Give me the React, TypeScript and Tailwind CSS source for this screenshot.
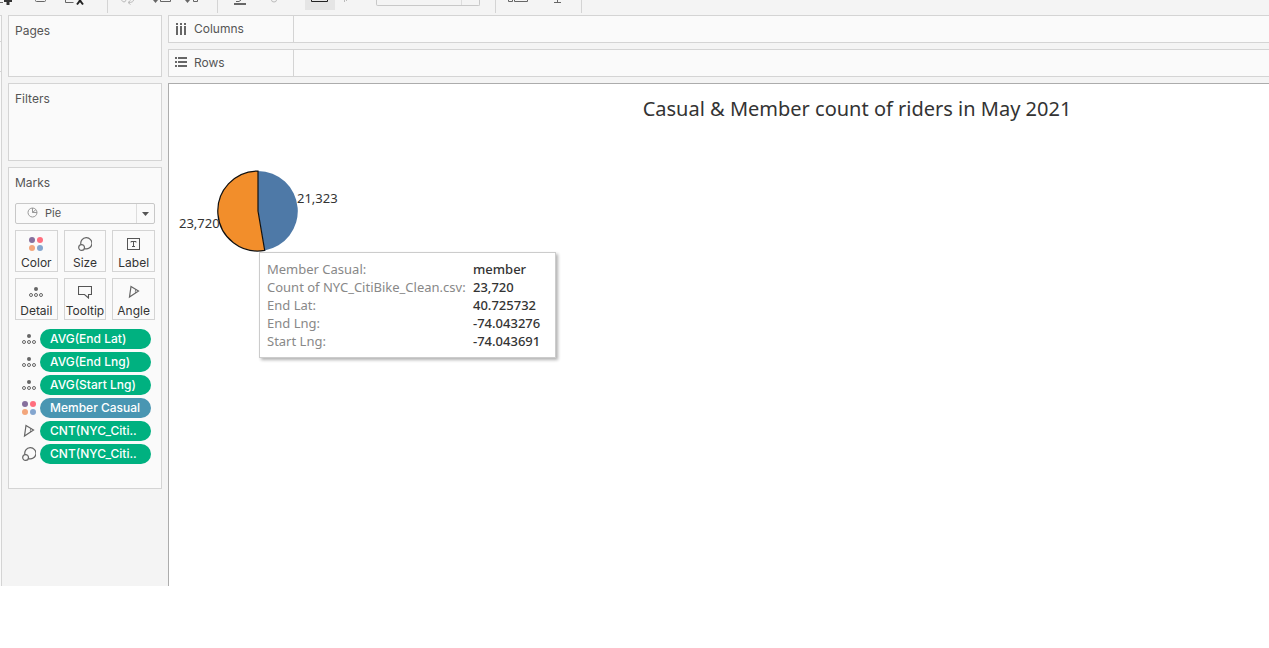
import type { ReactNode } from "react";

function ColorIcon() {
  return (
    <svg className="shrink-0" width="14" height="14" viewBox="0 0 14 14" aria-hidden="true">
      <circle cx="3" cy="3" r="3" fill="#86709d" />
      <circle cx="11" cy="3" r="3" fill="#ff6e7e" />
      <circle cx="3" cy="11" r="3" fill="#f3a67c" />
      <circle cx="11" cy="11" r="3" fill="#84a6cf" />
    </svg>
  );
}

function SizeIcon() {
  return (
    <svg className="shrink-0" width="14" height="14" viewBox="0 0 14 14" fill="none" stroke="#666" strokeWidth="1.2" aria-hidden="true">
      <path d="M2.9 7.6A5.6 5.6 0 1 1 6.5 11.6" />
      <circle cx="3.6" cy="10.5" r="2.9" />
    </svg>
  );
}

function LabelIcon() {
  return (
    <svg className="shrink-0" width="14" height="14" viewBox="0 0 14 14" fill="none" stroke="#555" aria-hidden="true">
      <rect x="0.5" y="1.5" width="12" height="11" />
      <path d="M4 5.5V4.5H9V5.5M6.5 4.5V10M5 9.5H8" />
    </svg>
  );
}

function DetailIcon() {
  return (
    <svg className="shrink-0" width="14" height="14" viewBox="0 0 14 14" aria-hidden="true">
      <circle cx="7" cy="4" r="2" fill="#666" />
      <g fill="none" stroke="#666">
        <circle cx="2" cy="10" r="1.5" />
        <circle cx="7" cy="10" r="1.5" />
        <circle cx="12" cy="10" r="1.5" />
      </g>
    </svg>
  );
}

function TooltipIcon() {
  return (
    <svg className="shrink-0" width="14" height="14" viewBox="0 0 14 14" fill="none" stroke="#555" strokeWidth="1.1" aria-hidden="true">
      <path d="M0.5 1.5H13.5V9.5H10.5V13L6.5 9.5H0.5Z" />
    </svg>
  );
}

function AngleIcon() {
  return (
    <svg className="shrink-0" width="14" height="14" viewBox="0 0 14 14" fill="none" stroke="#666" strokeWidth="1.2" aria-hidden="true">
      <path d="M4 1.5L11.5 6L2.500 12Z" />
      <path d="M8.8 4.4Q8 6.3 8.600 8" strokeWidth="0.8" />
    </svg>
  );
}

function Card({ title, className, children }: { title: string; className: string; children?: ReactNode }) {
  return (
    <section className={`border border-[#d4d4d4] bg-[#fafafa] px-1.5 pt-1.5 ${className}`}>
      <h2 className="text-[12px] leading-[18px] text-[#555]">{title}</h2>
      {children}
    </section>
  );
}

function Shelf({ name, icon }: { name: string; icon: ReactNode }) {
  return (
    <div className="flex h-7 border border-r-0 border-[#d4d4d4] bg-[#fafafa]">
      <div className="flex w-[125px] items-center gap-1.5 border-r border-[#d4d4d4] pl-1.5 text-[12px] text-[#555]">
        {icon}
        <span>{name}</span>
      </div>
      <div className="flex-1" />
    </div>
  );
}

const markButtons: { name: string; icon: ReactNode }[] = [
  { name: "Color", icon: <ColorIcon /> },
  { name: "Size", icon: <SizeIcon /> },
  { name: "Label", icon: <LabelIcon /> },
  { name: "Detail", icon: <DetailIcon /> },
  { name: "Tooltip", icon: <TooltipIcon /> },
  { name: "Angle", icon: <AngleIcon /> },
];

const pills: { text: string; tone: string; icon: ReactNode }[] = [
  { text: "AVG(End Lat)", tone: "bg-[#00b180]", icon: <DetailIcon /> },
  { text: "AVG(End Lng)", tone: "bg-[#00b180]", icon: <DetailIcon /> },
  { text: "AVG(Start Lng)", tone: "bg-[#00b180]", icon: <DetailIcon /> },
  { text: "Member Casual", tone: "bg-[#4996b2]", icon: <ColorIcon /> },
  { text: "CNT(NYC_Citi..", tone: "bg-[#00b180]", icon: <AngleIcon /> },
  { text: "CNT(NYC_Citi..", tone: "bg-[#00b180]", icon: <SizeIcon /> },
];

const tooltipRows = [
  ["Member Casual:", "member"],
  ["Count of NYC_CitiBike_Clean.csv:", "23,720"],
  ["End Lat:", "40.725732"],
  ["End Lng:", "-74.043276"],
  ["Start Lng:", "-74.043691"],
];

function Tool({ label, className, children }: { label: string; className: string; children: ReactNode }) {
  return (
    <button type="button" aria-label={label} className={`flex h-2.5 items-start justify-center ${className}`}>
      {children}
    </button>
  );
}

function Toolbar() {
  return (
    <div role="toolbar" aria-label="Workbook" className="flex h-[15px] items-start overflow-hidden">
      <div className="flex h-[13px] w-[108px] border-r border-[#d4d4d4]">
        <Tool label="New worksheet" className="w-6 justify-start!">
          <svg width="14" height="6" viewBox="0 0 14 6"><path d="M0 2.5H3" stroke="#666" /><path d="M4 0H12V2H9.5V5H6.5V2H4Z" fill="#333" /></svg>
        </Tool>
        <Tool label="Duplicate" className="w-8">
          <svg width="12" height="6" viewBox="0 0 12 6"><path d="M1.5 0V0.500Q1.500 1.500 2.500 1.500H10.500Q11.500 1.500 11.500 0.500V0" fill="none" stroke="#666" /></svg>
        </Tool>
        <Tool label="Clear sheet" className="w-9">
          <svg width="20" height="6" viewBox="0 0 20 6" fill="none"><path d="M1.5 0V2.5H9.5" stroke="#666" /><path d="M18 -2L13 4.5M14 -2L19 4.5" stroke="#222" strokeWidth="2" /></svg>
        </Tool>
      </div>
      <div className="flex h-[13px] w-[110px] border-r border-[#d4d4d4] pl-[3px]">
        <Tool label="Swap rows and columns" className="w-[34px]">
          <svg width="14" height="6" viewBox="0 0 14 6" fill="none" stroke="#bbb"><path d="M0.5 0L2 1.8H4L5 0M12.5 0Q12.5 2.5 7.5 2.5M9.5 0.5L7 2.5L9.5 4.5" /></svg>
        </Tool>
        <Tool label="Sort ascending" className="w-[34px]">
          <svg width="20" height="6" viewBox="0 0 20 6"><path d="M1 0H6L3.5 3Z" fill="#666" /><path d="M8.5 0V1.5H18.5V0" fill="none" stroke="#666" /></svg>
        </Tool>
        <Tool label="Sort descending" className="w-[26px]">
          <svg width="14" height="6" viewBox="0 0 14 6"><path d="M0 0H5L2.5 3Z" fill="#666" /><path d="M8.5 0V1.5H12.5V0" fill="none" stroke="#666" /></svg>
        </Tool>
      </div>
      <div className="flex h-[13px] w-[278px] border-r border-[#d4d4d4]">
        <Tool label="Highlight" className="w-11">
          <svg width="12" height="6" viewBox="0 0 12 6"><path d="M0 3H12V5H0Z" fill="#666" /><path d="M2 1.5H5L7 0" fill="none" stroke="#666" /></svg>
        </Tool>
        <Tool label="Group members" className="w-6">
          <svg width="6" height="6" viewBox="0 0 6 6"><path d="M0.5 0Q0.5 2 3 2Q5.5 2 5.5 0" fill="none" stroke="#bbb" /></svg>
        </Tool>
        <Tool label="Show mark labels" className="ml-[19px] w-[30px] bg-[#e5e5e5]">
          <svg width="18" height="6" viewBox="0 0 18 6"><path d="M0.5 0V1.5H16.5V0" fill="none" stroke="#222" /></svg>
        </Tool>
        <Tool label="Fix axes" className="w-[22px]">
          <svg width="4" height="4" viewBox="0 0 4 4"><path d="M0.5 0V2M2.5 0V1" fill="none" stroke="#bbb" /></svg>
        </Tool>
        <select aria-label="Fit" className="ml-[19px] h-1.5 w-[104px] appearance-none rounded-b-[2px] border border-t-0 border-[#c8c8c8] bg-[linear-gradient(#ddd,#ddd)] bg-[length:1px_100%] bg-[position:84px_0] bg-no-repeat" />
      </div>
      <div className="flex h-[13px] w-[86px] border-r border-[#d4d4d4]">
        <Tool label="Show cards" className="w-11">
          <svg width="20" height="6" viewBox="0 0 20 6"><path d="M0.5 0V1.5H4.5V0M6.5 0V1.5H19.5V0" fill="none" stroke="#666" /></svg>
        </Tool>
        <Tool label="Presentation mode" className="w-9">
          <svg width="8" height="6" viewBox="0 0 8 6"><path d="M3.5 0V2.5M0 2.5H7" fill="none" stroke="#666" /></svg>
        </Tool>
      </div>
    </div>
  );
}

export default function App() {
  return (
    <div className="min-h-screen bg-white font-['Inter','Noto_Sans',sans-serif] text-[#333]">
      <div className="bg-[#f4f4f4]">
        <Toolbar />
        <div className="flex">
          <div className="w-px bg-[#fafafa]">
            <div className="h-[27px] border-y border-[#d4d4d4]" />
            <div className="h-[30px] border-b border-[#d4d4d4]" />
          </div>
          <aside className="flex w-[167px] shrink-0 flex-col gap-1.5 border-l border-[#d4d4d4] px-1.5">
            <Card title="Pages" className="h-[62px]" />
            <Card title="Filters" className="h-[78px]" />
            <Card title="Marks" className="pb-6">
              <div className="relative mt-[11px]">
                <svg className="absolute top-1 left-3" width="11" height="11" viewBox="0 0 11 11" fill="none" stroke="#999" aria-hidden="true">
                  <circle cx="5.5" cy="5.5" r="4.5" />
                  <path d="M5.5 1V5.5H10M5.5 5.5L9 2.5" />
                </svg>
                <select aria-label="Mark type" className="block h-[21px] w-full appearance-none rounded-[2px] border border-[#c8c8c8] bg-transparent pl-[29px] text-[11px] leading-[19px] text-[#555]">
                  <option>Pie</option>
                </select>
                <div className="pointer-events-none absolute inset-y-px right-px flex w-[18px] items-center justify-center border-l border-[#ddd]">
                  <svg width="7" height="4" viewBox="0 0 7 4" aria-hidden="true"><path d="M0 0H7L3.5 4Z" fill="#555" /></svg>
                </div>
              </div>
              <div className="mt-1.5 grid grid-cols-3 gap-1.5">
                {markButtons.map((b) => (
                  <button key={b.name} type="button" className="flex h-[42px] flex-col items-center gap-1 border border-[#d4d4d4] pt-1.5 text-[12px] leading-4 text-[#333]">
                    {b.icon}
                    <span>{b.name}</span>
                  </button>
                ))}
              </div>
              <ul className="mt-[9px] flex flex-col gap-[3px] pr-1 pl-[7px]">
                {pills.map((p, i) => (
                  <li key={i} className="flex items-center gap-1">
                    {p.icon}
                    <button type="button" className={`h-5 flex-1 rounded-full pl-2.5 text-left text-[12px] leading-5 font-medium whitespace-nowrap text-white ${p.tone}`}>
                      {p.text}
                    </button>
                  </li>
                ))}
              </ul>
            </Card>
          </aside>
          <main className="flex min-w-0 flex-1 flex-col gap-1.5">
            <Shelf
              name="Columns"
              icon={
                <svg width="13" height="13" viewBox="0 0 13 13" fill="#666" aria-hidden="true">
                  <path d="M1 0H3V2H1ZM5 0H7V2H5ZM9 0H11V2H9ZM1 3H3V12H1ZM5 3H7V12H5ZM9 3H11V12H9Z" />
                </svg>
              }
            />
            <Shelf
              name="Rows"
              icon={
                <svg width="13" height="13" viewBox="0 0 13 13" fill="#666" aria-hidden="true">
                  <path d="M0 0H2V2H0ZM3 0H12V2H3ZM0 4H2V6H0ZM3 4H12V6H3ZM0 8H2V10H0ZM3 8H12V10H3Z" />
                </svg>
              }
            />
            <section className="relative h-[503px] border-t border-l border-[#acacac] bg-white font-['Noto_Sans',sans-serif]">
              <h1 className="pt-2.5 pl-[276px] text-center text-[20px] leading-[30px] whitespace-nowrap text-[#333]">
                Casual &amp; Member count of riders in May 2021
              </h1>
              <svg className="absolute top-[86px] left-12" width="82" height="82" viewBox="0 0 82 82" role="img" aria-label="Pie chart of casual and member riders">
                <path d="M41 41V1A40 40 0 0 1 47.7 80.4Z" fill="#4e79a7" />
                <path d="M41 41V1A40 40 0 1 0 47.7 80.4Z" fill="#f28e2b" stroke="#111" strokeWidth="1.2" />
              </svg>
              <span className="absolute top-[105px] left-32 text-[13px] leading-[18px]">21,323</span>
              <span className="absolute top-[130px] left-2.5 text-[13px] leading-[18px]">23,720</span>
              <div role="tooltip" className="absolute top-[168px] left-[90px] border border-[#ccc] bg-white px-[7px] py-[7px] shadow-[2px_2px_3px_rgba(0,0,0,0.3)]">
                <table className="text-[13px] leading-[18px]">
                  <tbody>
                    {tooltipRows.map(([k, v]) => (
                      <tr key={k}>
                        <th scope="row" className="w-[206px] min-w-[206px] p-0 text-left font-normal whitespace-nowrap text-[#888]">{k}</th>
                        <td className="w-[75px] min-w-[75px] p-0 font-medium whitespace-nowrap text-[#333]">{v}</td>
                      </tr>
                    ))}
                  </tbody>
                </table>
              </div>
            </section>
          </main>
        </div>
      </div>
    </div>
  );
}
